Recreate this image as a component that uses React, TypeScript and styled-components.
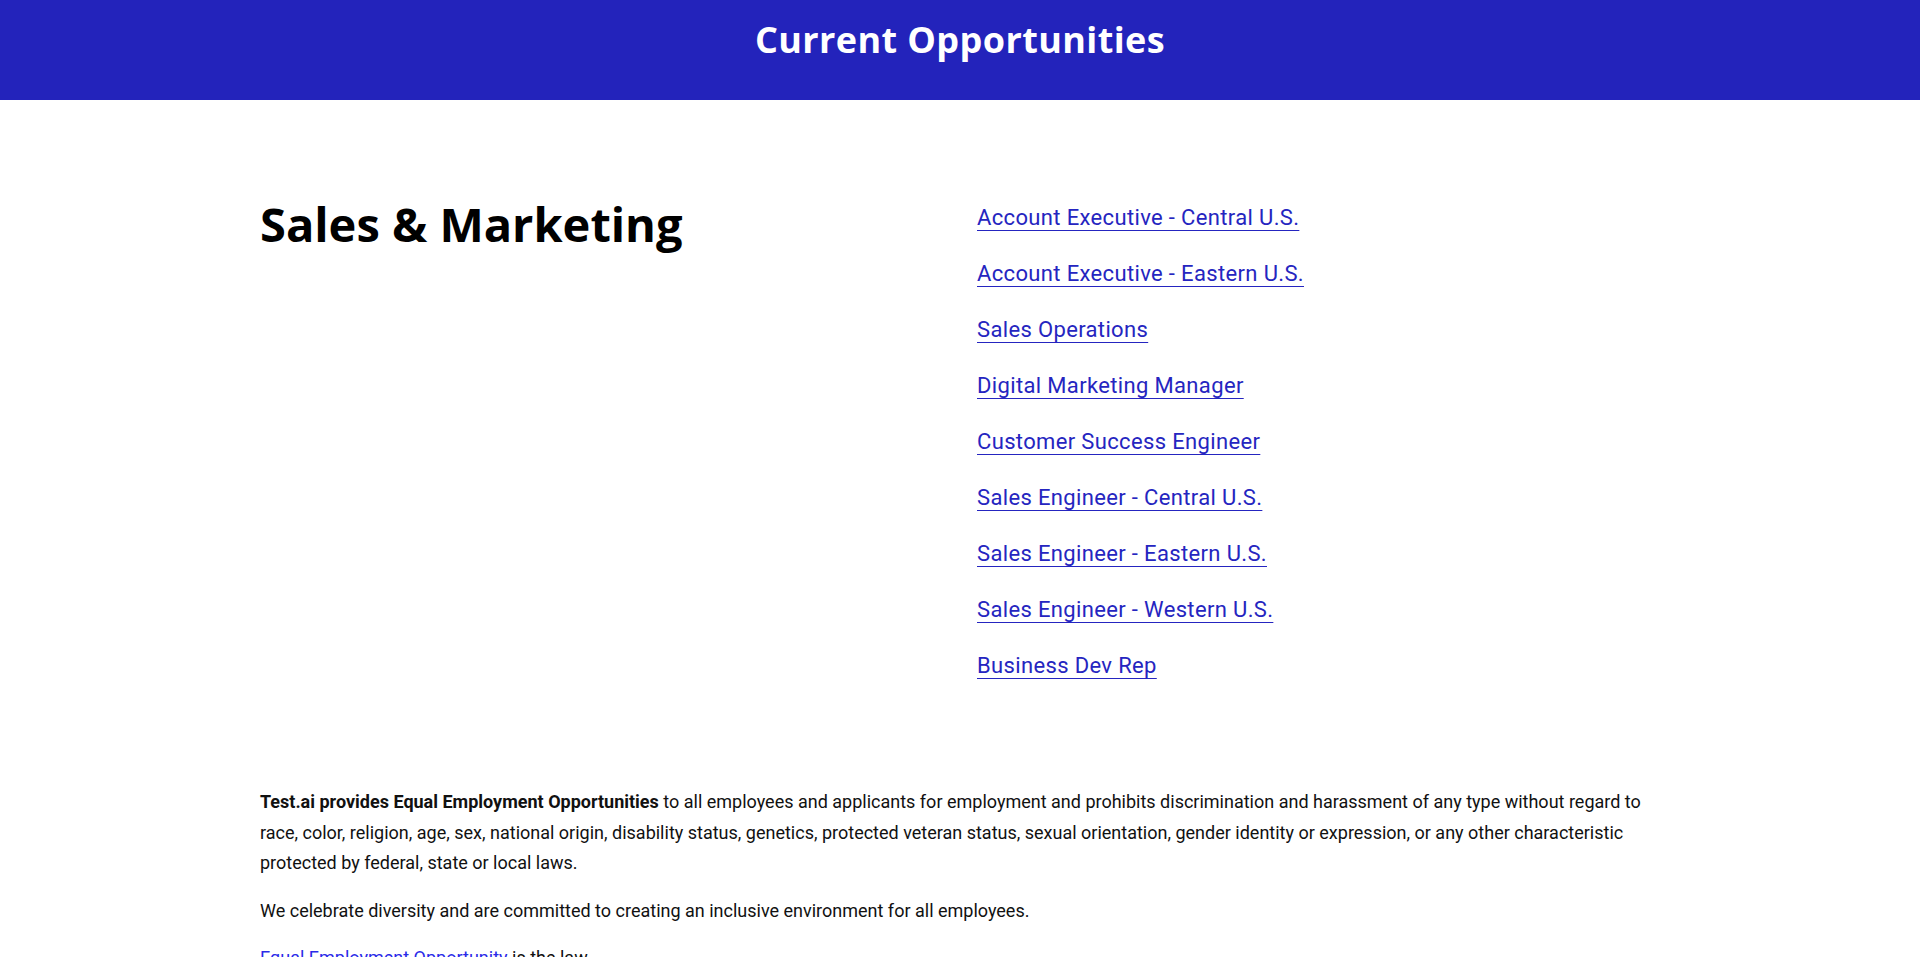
import React from "react";
import styled, { createGlobalStyle } from "styled-components";

const Global = createGlobalStyle`
  html, body { margin: 0; padding: 0; background: #fff; }
  body { font-family: Roboto, "Noto Sans", sans-serif; color: #111; }
  * { box-sizing: border-box; }
`;

const Header = styled.header`
  height: 100px;
  background: #2323bb;
  display: flex;
  align-items: center;
  justify-content: center;
`;

const HeaderTitle = styled.h1`
  margin: 0 0 20px;
  color: #fff;
  font-family: "Open Sans", sans-serif;
  font-weight: 700;
  font-size: 36px;
  letter-spacing: 0.4px;
  line-height: 1.2;
`;

const Container = styled.main`
  width: 1400px;
  margin: 0 auto;
`;

const Section = styled.section`
  display: grid;
  grid-template-columns: 717px 1fr;
  padding-top: 96px;
`;

const SectionTitle = styled.h2`
  margin: 0;
  font-family: "Open Sans", sans-serif;
  font-weight: 700;
  font-size: 47px;
  line-height: 56px;
  letter-spacing: 0;
  color: #000;
`;

const JobList = styled.ul`
  list-style: none;
  margin: 0;
  padding: 5px 0 0;
  display: flex;
  flex-direction: column;
  gap: 23px;
`;

const JobLink = styled.a`
  font-family: Roboto, sans-serif;
  font-size: 22px;
  line-height: 33px;
  letter-spacing: 0.35px;
  color: #2525c0;
  text-decoration: underline;
  text-underline-offset: 5px;
  text-decoration-thickness: 1px;
`;

const Legal = styled.div`
  padding-top: 105px;
  font-family: Roboto, sans-serif;
  font-size: 18px;
  line-height: 30.6px;
  color: #111;
`;

const Para = styled.p`
  margin: 0 0 17px;
`;

const InlineLink = styled.a`
  color: #2a2ae8;
  text-decoration: none;
`;

const jobs = [
  "Account Executive - Central U.S.",
  "Account Executive - Eastern U.S.",
  "Sales Operations",
  "Digital Marketing Manager",
  "Customer Success Engineer",
  "Sales Engineer - Central U.S.",
  "Sales Engineer - Eastern U.S.",
  "Sales Engineer - Western U.S.",
  "Business Dev Rep",
];

export default function App() {
  return (
    <>
      <Global />
      <Header>
        <HeaderTitle>Current Opportunities</HeaderTitle>
      </Header>
      <Container>
        <Section>
          <SectionTitle>Sales &amp; Marketing</SectionTitle>
          <JobList>
            {jobs.map((j) => (
              <li key={j}>
                <JobLink href="#">{j}</JobLink>
              </li>
            ))}
          </JobList>
        </Section>
        <Legal>
          <Para>
            <strong>Test.ai provides Equal Employment Opportunities</strong> to all employees and applicants for employment and prohibits discrimination and harassment of any type without regard to race, color, religion, age, sex, national origin, disability status, genetics, protected veteran status, sexual orientation, gender identity or expression, or any other characteristic protected by federal, state or local laws.
          </Para>
          <Para>We celebrate diversity and are committed to creating an inclusive environment for all employees.</Para>
          <Para>
            <InlineLink href="#">Equal Employment Opportunity</InlineLink> is the law.
          </Para>
        </Legal>
      </Container>
    </>
  );
}
